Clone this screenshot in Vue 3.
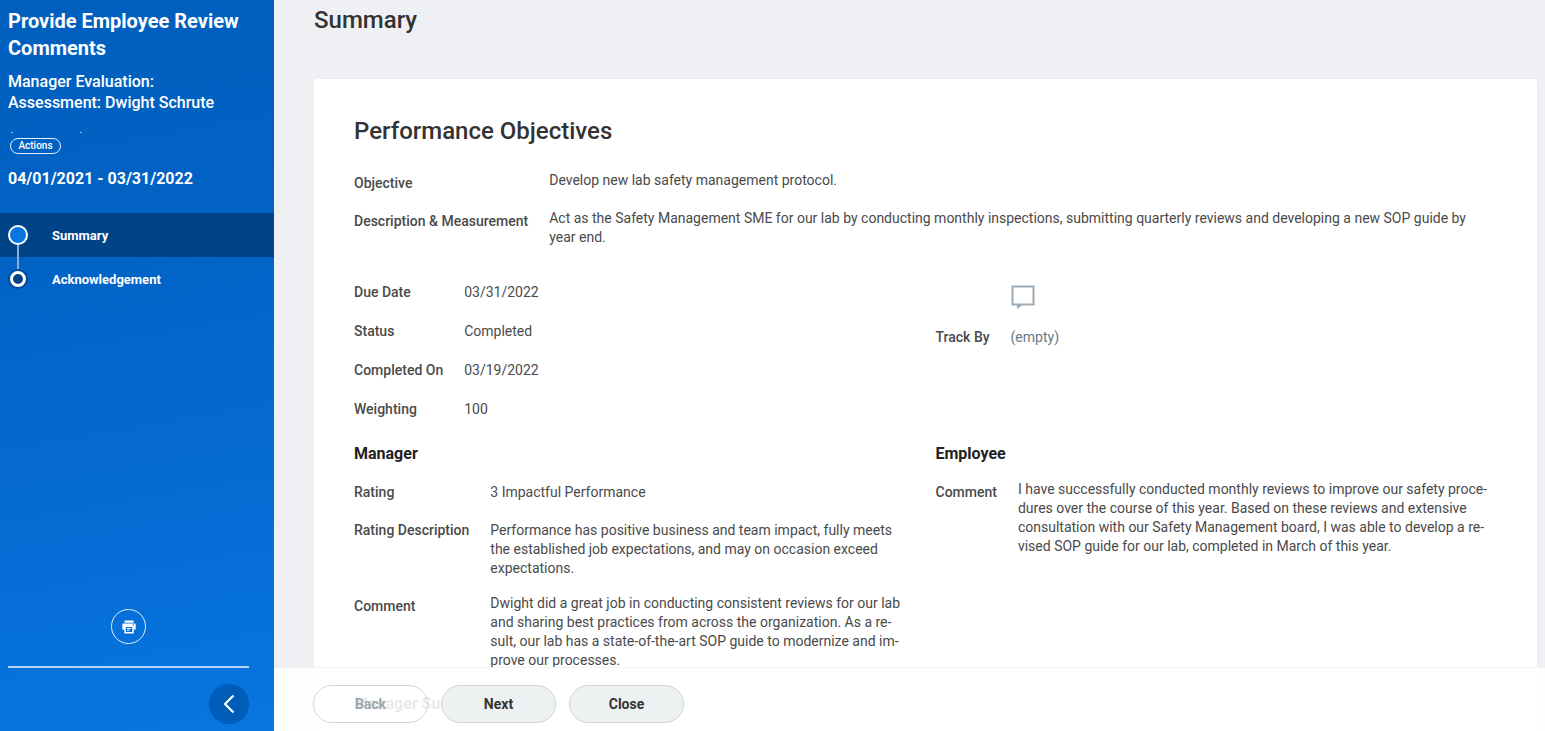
<script setup>
import { ref } from 'vue'

const steps = ref([
  { label: 'Summary', current: true },
  { label: 'Acknowledgement', current: false },
])

const objective = [
  { label: 'Objective', value: 'Develop new lab safety management protocol.', rich: true },
  {
    label: 'Description & Measurement',
    value: 'Act as the Safety Management SME for our lab by conducting monthly inspections, submitting quarterly reviews and developing a new SOP guide by year end.',
    rich: true,
  },
]

const status = [
  { label: 'Due Date', value: '03/31/2022' },
  { label: 'Status', value: 'Completed' },
  { label: 'Completed On', value: '03/19/2022' },
  { label: 'Weighting', value: '100' },
]

const manager = [
  { label: 'Rating', value: '3 Impactful Performance' },
  {
    label: 'Rating Description',
    value: 'Performance has positive business and team impact, fully meets the established job expectations, and may on occasion exceed expectations.',
  },
  {
    label: 'Comment',
    value: 'Dwight did a great job in conducting consistent reviews for our lab and sharing best practices from across the organization. As a re\u00ADsult, our lab has a state-of-the-art SOP guide to modernize and im\u00ADprove our processes.',
    rich: true,
  },
]

const employee = [
  {
    label: 'Comment',
    value: 'I have successfully conducted monthly reviews to improve our safety proce\u00ADdures over the course of this year. Based on these reviews and extensive consultation with our Safety Management board, I was able to develop a re\u00ADvised SOP guide for our lab, completed in March of this year.',
    rich: true,
  },
]
</script>

<template>
  <div class="page">
    <aside class="sidebar">
      <h1 class="task-title">Provide Employee Review Comments</h1>
      <p class="task-sub">Manager Evaluation:<br />Assessment: Dwight Schrute</p>
      <div class="marks" aria-hidden="true"><span></span><span></span></div>
      <button type="button" class="actions">Actions</button>
      <p class="period">04/01/2021 - 03/31/2022</p>

      <nav class="steps">
        <a v-for="s in steps" :key="s.label" href="#" class="step" :class="{ current: s.current }">
          <span class="marker"><span class="dot"></span></span>
          <span>{{ s.label }}</span>
        </a>
      </nav>

      <div class="side-foot">
        <button type="button" class="print" aria-label="Print">
          <svg width="14" height="14" viewBox="0 0 14 14">
            <path fill="#fff" d="M2.5 0.5h9v2.2h-9z" />
            <path fill="#fff" fill-rule="evenodd" d="M1.5 3.5h11q1.2 0 1.2 1.2v4.8h-2v4H2.3v-4h-2V4.7q0-1.2 1.2-1.2zM3.8 7v5h6.4V7zM10.8 4.3v1.2h1.2V4.3z" />
            <path fill="#fff" d="M5 8h4v1H5zM5 9.8h2.5v1H5z" />
          </svg>
        </button>
        <div class="collapse-bar">
          <button type="button" class="collapse" aria-label="Collapse panel">
            <svg width="12" height="20" viewBox="0 0 12 20" fill="none" stroke="#fff" stroke-width="2.2">
              <path d="M10.500 1.500L2 10l8.500 8.500" />
            </svg>
          </button>
        </div>
      </div>
    </aside>

    <main class="main">
      <div class="scroll">
        <h2 class="page-title">Summary</h2>
        <section class="card">
          <h3 class="card-title">Performance Objectives</h3>
          <dl class="fields tight">
            <template v-for="f in objective" :key="f.label">
              <dt>{{ f.label }}</dt>
              <dd :class="{ rich: f.rich }">{{ f.value }}</dd>
            </template>
          </dl>

          <div class="columns status-row">
            <dl class="fields">
              <template v-for="f in status" :key="f.label">
                <dt>{{ f.label }}</dt>
                <dd>{{ f.value }}</dd>
              </template>
            </dl>
            <dl class="fields track">
              <dt></dt>
              <dd class="note">
                <svg width="24" height="25" viewBox="0 0 24 25">
                  <path fill="none" stroke="#9cabb5" stroke-width="2" d="M1.500 1.500h21v18h-21z" />
                  <path fill="#9cabb5" d="M5.500 20h5.500L6.500 24z" />
                </svg>
              </dd>
              <dt>Track By</dt>
              <dd class="empty">(empty)</dd>
            </dl>
          </div>

          <div class="columns">
            <div>
              <h4 class="group">Manager</h4>
              <dl class="fields tight">
                <template v-for="f in manager" :key="f.label">
                  <dt>{{ f.label }}</dt>
                  <dd :class="{ rich: f.rich }">{{ f.value }}</dd>
                </template>
              </dl>
              <h4 class="group next-group">Manager Summary</h4>
            </div>
            <div>
              <h4 class="group">Employee</h4>
              <dl class="fields">
                <template v-for="f in employee" :key="f.label">
                  <dt>{{ f.label }}</dt>
                  <dd :class="{ rich: f.rich }">{{ f.value }}</dd>
                </template>
              </dl>
            </div>
          </div>
        </section>
      </div>

      <footer class="footer">
        <button type="button" class="btn" disabled>Back</button>
        <button type="button" class="btn">Next</button>
        <button type="button" class="btn">Close</button>
      </footer>
    </main>
  </div>
</template>

<style>
body {
  margin: 0;
  overflow: hidden;
}
</style>

<style scoped>
.page {
  display: flex;
  height: 100vh;
  overflow: hidden;
  font-family: Roboto, "Liberation Sans", sans-serif;
  font-size: 14px;
  line-height: 19px;
  color: #4a4a4a;
  background: #eff0f3;
}
h1, h2, h3, h4, p, dl, dt, dd {
  margin: 0;
}
button {
  font-family: inherit;
  padding: 0;
  cursor: pointer;
}

.sidebar {
  flex: 0 0 274px;
  display: flex;
  flex-direction: column;
  color: #fff;
  background: linear-gradient(170deg, #005fbd 0%, #0263c6 35%, #0875e1 100%);
}
.task-title {
  padding: 8px 8px 0;
  font-size: 20px;
  line-height: 27px;
  font-weight: 700;
}
.task-sub {
  padding: 9px 8px 0;
  font-size: 16px;
  line-height: 21px;
  font-weight: 500;
}
.marks {
  display: flex;
  gap: 67px;
  padding: 19px 11px 5px;
}
.marks span {
  width: 2px;
  height: 1px;
  background: #8fbbe8;
}
.actions {
  align-self: flex-start;
  width: 51px;
  height: 16px;
  margin-left: 10px;
  border: 1px solid #e3effb;
  border-radius: 8px;
  background: none;
  color: #fff;
  font-size: 10px;
  line-height: 12px;
  font-weight: 500;
}
.period {
  padding: 14px 8px 0;
  font-size: 16px;
  line-height: 21px;
  font-weight: 700;
}
.steps {
  margin-top: 24px;
}
.step {
  display: flex;
  align-items: center;
  gap: 24px;
  height: 44px;
  padding-left: 8px;
  color: #fff;
  font-size: 13px;
  font-weight: 700;
  text-decoration: none;
}
.step.current {
  background: #004387;
}
.marker {
  position: relative;
  display: flex;
  justify-content: center;
  width: 20px;
}
.dot {
  box-sizing: border-box;
  width: 16px;
  height: 16px;
  border: 3px solid #fff;
  border-radius: 50%;
  background: #004387;
  box-shadow: 0 0 0 2px #004a97;
}
.current .dot {
  width: 20px;
  height: 20px;
  border-width: 2px;
  background: #0875e1;
  box-shadow: none;
}
.current .marker::after {
  content: "";
  position: absolute;
  z-index: 1;
  top: 20px;
  left: 9px;
  width: 2px;
  height: 24px;
  background: #8aaed4;
}
.side-foot {
  margin-top: auto;
  padding: 0 25px 7px 8px;
}
.print {
  display: flex;
  align-items: center;
  justify-content: center;
  box-sizing: border-box;
  width: 35px;
  height: 35px;
  margin: 0 auto 22px;
  border: 1px solid #e0edfb;
  border-radius: 50%;
  background: none;
}
.collapse-bar {
  display: flex;
  justify-content: flex-end;
  padding-top: 16px;
  border-top: 2px solid #b5d5f6;
}
.collapse {
  display: flex;
  align-items: center;
  justify-content: center;
  width: 40px;
  height: 40px;
  border: 0;
  border-radius: 50%;
  background: #005cb9;
}

.main {
  position: relative;
  flex: 1;
  min-width: 0;
}
.scroll {
  box-sizing: border-box;
  height: 100%;
  overflow: hidden;
  padding: 4px 8px 0 40px;
}
.page-title {
  font-size: 24px;
  line-height: 32px;
  font-weight: 500;
  color: #333;
}
.card {
  margin-top: 43px;
  min-height: 100%;
  box-sizing: border-box;
  padding: 36px 40px 40px;
  border-radius: 3px;
  background: #fff;
  box-shadow: 0 0 2px rgba(0, 0, 0, 0.05);
}
.card-title {
  margin-bottom: 24px;
  font-size: 24px;
  line-height: 32px;
  font-weight: 500;
  color: #333;
}
.fields {
  display: grid;
  grid-template-columns: max-content 1fr;
  gap: 17px 21px;
  align-content: start;
}
.fields.tight {
  row-gap: 16px;
}
dt {
  padding-top: 3px;
  font-weight: 500;
}
dd {
  padding: 3px 8px 0 0;
  min-width: 0;
}
dd.rich {
  padding-top: 0;
}
.columns {
  display: grid;
  grid-template-columns: 1fr 1fr;
  gap: 20px;
}
.status-row {
  margin: 33px 0 24px;
}
.fields.track {
  row-gap: 12px;
}
dd.note {
  height: 28px;
  padding-top: 5px;
  line-height: 0;
}
.empty {
  color: #667985;
}
.group {
  margin-bottom: 16px;
  font-size: 16px;
  line-height: 21px;
  font-weight: 700;
  color: #222;
}
.next-group {
  margin-top: 23px;
}

.footer {
  position: absolute;
  right: 0;
  bottom: 0;
  left: 0;
  display: flex;
  gap: 13px;
  padding: 17px 39px 8px;
  border-top: 1px solid #f2f3f4;
  background: rgba(255, 255, 255, 0.9);
}
.btn {
  box-sizing: border-box;
  width: 115px;
  height: 38px;
  border: 1px solid #ced5db;
  border-radius: 19px;
  background: #edf1f2;
  color: #333;
  font-size: 14px;
  font-weight: 700;
}
.btn:disabled {
  background: none;
  color: #9aa7ae;
}
</style>
